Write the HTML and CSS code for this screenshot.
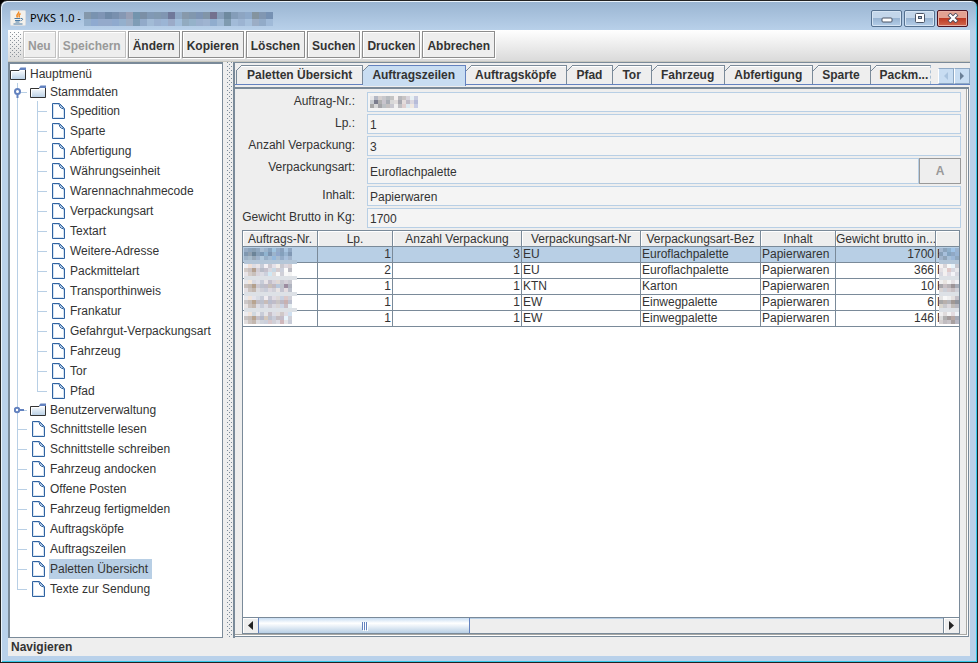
FILE: index.html
```html
<!DOCTYPE html>
<html lang="de">
<head>
  <meta charset="UTF-8">
  <title>PVKS 1.0</title>
  <link rel="stylesheet" href="styles.css">
</head>
<body>
  <svg class="defs" width="0" height="0" aria-hidden="true">
    <defs>
      <linearGradient id="folderFill" x1="0" y1="0" x2="0" y2="1">
        <stop offset="0" stop-color="#fff"/>
        <stop offset="1" stop-color="#b8cfe5"/>
      </linearGradient>
      <symbol id="folder" viewBox="0 0 16 16">
        <path d="M.5 4.500H9l1-1h5.500v10H.5z" fill="url(#folderFill)" stroke="#333"/>
        <path d="M9 3.500L10.500 1.500H16V4H9z" fill="#6382bf"/>
        <path d="M1.500 12.500v-7H10l1-1h3.500" fill="none" stroke="#fff"/>
      </symbol>
      <symbol id="leaf" viewBox="0 0 16 16">
        <path d="M2.500.5h7l5 5v10h-12z" fill="#fff" stroke="#2f62a0"/>
        <path d="M3.500 14.500v-13H9M13.500 6v8.500h-10" fill="none" stroke="#d5e3f2"/>
        <path d="M9 1l1 3 1 1 3 1" fill="none" stroke="#2f62a0"/>
        <path d="M10 2l3 3" stroke="#8fb0d8"/>
      </symbol>
      <symbol id="open" viewBox="0 0 8 10">
        <circle cx="4.500" cy="3.500" r="2.500" fill="#fff" stroke="#6382bf" stroke-width="2"/>
        <path d="M4.500 6v4" stroke="#6382bf" stroke-width="2"/>
      </symbol>
      <symbol id="closed" viewBox="0 0 10 8">
        <circle cx="3" cy="4" r="2.200" fill="#fff" stroke="#6382bf" stroke-width="2"/>
        <path d="M5 4h5" stroke="#6382bf" stroke-width="2"/>
      </symbol>
    </defs>
  </svg>

  <div class="window">
    <header class="titlebar">
      <svg class="app-icon" width="16" height="16" viewBox="0 0 16 16">
        <rect x=".5" y=".5" width="15" height="15" rx="1" fill="#f3f1ec" stroke="#d9dde2"/>
        <path d="M8.500 1.500c1.500 2-3.500 3-1 6M10.500 3.500c-2 1-2 2-1 4" fill="none" stroke="#f08a24" stroke-width="1.400"/>
        <path d="M4.500 8.500h6M5 10.500h5M5.500 12h4M3.500 14h9" stroke="#4a7aa5"/>
        <path d="M11 8.500c2.500-.5 2 2-.5 2.300" fill="none" stroke="#4a7aa5"/>
      </svg>
      <span class="title">PVKS 1.0 -</span>
      <svg class="mosaic" width="189" height="14" data-cols="27" data-size="7" data-colors="8498ab 7993b0 7f95b5 708aa8 7890ae 8598b4 98a0b6 7394ad 7b8fa6 8199b5 8199b0 8096b2 70799a 8ea8c5 8799ab 8197ae 7d94b4 8195a8 73718f 869fbb 6e8a9f 849db9 8da5c2 8ea9c9 84949f 8197b2 7691b3 95b0cc 8faad0 94aacb 94aacb 8faace 94b0cd 9cadc4 7f9db6 92aac9 a2bbd6 9bb1d0 9bb5d5 9babc8 a2bedb 92abc0 95b2ca 9bb0ce 9fb4d1 90adce 9fb9d5 7f9bb0 a2bbd8 9cb4d2 a6c0dc 9badc5 92abc8 a0bad8"></svg>
      <div class="window-buttons">
        <button type="button" class="win-btn" aria-label="Minimieren">
          <svg width="12" height="10" viewBox="0 0 12 10"><rect x="1" y="5" width="10" height="4" rx="1" fill="#fff" stroke="#4b5566"/></svg>
        </button>
        <button type="button" class="win-btn" aria-label="Maximieren">
          <svg width="12" height="10" viewBox="0 0 12 10"><rect x="1.500" y=".5" width="9" height="9" rx="1" fill="#fff" stroke="#4b5566"/><rect x="4.500" y="3.500" width="3" height="2" fill="#9fb8d2" stroke="#4b5566"/></svg>
        </button>
        <button type="button" class="win-btn close" aria-label="Schließen">
          <svg width="12" height="10" viewBox="0 0 12 10"><path d="M2 1l8 8M10 1L2 9" stroke="#4b4a5c" stroke-width="4"/><path d="M2.500 1.500l7 7M9.500 1.500l-7 7" stroke="#fff" stroke-width="2.400"/></svg>
        </button>
      </div>
    </header>

    <nav class="toolbar">
      <span class="grip"></span>
      <button type="button" disabled>Neu</button>
      <button type="button" disabled>Speichern</button>
      <button type="button">Ändern</button>
      <button type="button">Kopieren</button>
      <button type="button">Löschen</button>
      <button type="button">Suchen</button>
      <button type="button">Drucken</button>
      <button type="button">Abbrechen</button>
    </nav>

    <main class="split">
      <aside class="tree">
        <div class="node root"><svg class="icon"><use href="#folder"/></svg><a href="#">Hauptmenü</a></div>
        <ul>
          <li>
            <div class="node folder"><svg class="handle open"><use href="#open"/></svg><svg class="icon"><use href="#folder"/></svg><a href="#">Stammdaten</a></div>
            <ul>
              <li><div class="node"><svg class="icon"><use href="#leaf"/></svg><a href="#">Spedition</a></div></li>
              <li><div class="node"><svg class="icon"><use href="#leaf"/></svg><a href="#">Sparte</a></div></li>
              <li><div class="node"><svg class="icon"><use href="#leaf"/></svg><a href="#">Abfertigung</a></div></li>
              <li><div class="node"><svg class="icon"><use href="#leaf"/></svg><a href="#">Währungseinheit</a></div></li>
              <li><div class="node"><svg class="icon"><use href="#leaf"/></svg><a href="#">Warennachnahmecode</a></div></li>
              <li><div class="node"><svg class="icon"><use href="#leaf"/></svg><a href="#">Verpackungsart</a></div></li>
              <li><div class="node"><svg class="icon"><use href="#leaf"/></svg><a href="#">Textart</a></div></li>
              <li><div class="node"><svg class="icon"><use href="#leaf"/></svg><a href="#">Weitere-Adresse</a></div></li>
              <li><div class="node"><svg class="icon"><use href="#leaf"/></svg><a href="#">Packmittelart</a></div></li>
              <li><div class="node"><svg class="icon"><use href="#leaf"/></svg><a href="#">Transporthinweis</a></div></li>
              <li><div class="node"><svg class="icon"><use href="#leaf"/></svg><a href="#">Frankatur</a></div></li>
              <li><div class="node"><svg class="icon"><use href="#leaf"/></svg><a href="#">Gefahrgut-Verpackungsart</a></div></li>
              <li><div class="node"><svg class="icon"><use href="#leaf"/></svg><a href="#">Fahrzeug</a></div></li>
              <li><div class="node"><svg class="icon"><use href="#leaf"/></svg><a href="#">Tor</a></div></li>
              <li><div class="node"><svg class="icon"><use href="#leaf"/></svg><a href="#">Pfad</a></div></li>
            </ul>
          </li>
          <li><div class="node folder"><svg class="handle closed"><use href="#closed"/></svg><svg class="icon"><use href="#folder"/></svg><a href="#">Benutzerverwaltung</a></div></li>
          <li><div class="node"><svg class="icon"><use href="#leaf"/></svg><a href="#">Schnittstelle lesen</a></div></li>
          <li><div class="node"><svg class="icon"><use href="#leaf"/></svg><a href="#">Schnittstelle schreiben</a></div></li>
          <li><div class="node"><svg class="icon"><use href="#leaf"/></svg><a href="#">Fahrzeug andocken</a></div></li>
          <li><div class="node"><svg class="icon"><use href="#leaf"/></svg><a href="#">Offene Posten</a></div></li>
          <li><div class="node"><svg class="icon"><use href="#leaf"/></svg><a href="#">Fahrzeug fertigmelden</a></div></li>
          <li><div class="node"><svg class="icon"><use href="#leaf"/></svg><a href="#">Auftragsköpfe</a></div></li>
          <li><div class="node"><svg class="icon"><use href="#leaf"/></svg><a href="#">Auftragszeilen</a></div></li>
          <li><div class="node"><svg class="icon"><use href="#leaf"/></svg><a href="#" class="selected">Paletten Übersicht</a></div></li>
          <li><div class="node"><svg class="icon"><use href="#leaf"/></svg><a href="#">Texte zur Sendung</a></div></li>
        </ul>
      </aside>

      <div class="divider"></div>

      <section class="content">
        <div class="tabs">
          <button type="button" class="tab">Paletten Übersicht</button>
          <button type="button" class="tab active">Auftragszeilen</button>
          <button type="button" class="tab">Auftragsköpfe</button>
          <button type="button" class="tab">Pfad</button>
          <button type="button" class="tab">Tor</button>
          <button type="button" class="tab">Fahrzeug</button>
          <button type="button" class="tab">Abfertigung</button>
          <button type="button" class="tab">Sparte</button>
          <button type="button" class="tab last">Packm...</button>
          <div class="tab-scroll">
            <button type="button" disabled aria-label="Zurück"><svg width="6" height="8" viewBox="0 0 6 8"><path d="M5 0v8L1 4z" fill="#a9c3de"/></svg></button>
            <button type="button" aria-label="Weiter"><svg width="6" height="8" viewBox="0 0 6 8"><path d="M1 0v8l4-4z" fill="#6a7f96"/></svg></button>
          </div>
        </div>

        <div class="panel">
          <form class="form">
            <label for="auftrag">Auftrag-Nr.:</label>
            <div class="field">
              <input type="text" id="auftrag" readonly>
              <svg class="mosaic over" width="50" height="12" data-cols="12" data-size="4" data-colors="e8e8ea b4b8c4 d4d0d0 c8c8cc b8bcc0 c4c4c4 f4f0f0 b8b8bc c8c4c4 d8d4dc e8f0f4 c8cce0 c8ccd0 7a7c8c b0b0b0 c8c4cc a8acb4 d8d8d8 e0dcdc a8a8b0 e4dcdc c0bcc8 dcd8e0 b8bcd8 a8a8a8 d8d8d8 a4a4a8 bcc0c4 c4c0c0 c8c8d0 f0f0f0 c0c0c4 e0d0d0 dce8f0 f0e8e0 c8cce4"></svg>
            </div>
            <label for="lp">Lp.:</label>
            <div class="field"><input type="text" id="lp" value="1" readonly></div>
            <label for="anzahl">Anzahl Verpackung:</label>
            <div class="field"><input type="text" id="anzahl" value="3" readonly></div>
            <label for="art">Verpackungsart:</label>
            <div class="field tall">
              <input type="text" id="art" value="Euroflachpalette" readonly>
              <button type="button" disabled>A</button>
            </div>
            <label for="inhalt">Inhalt:</label>
            <div class="field"><input type="text" id="inhalt" value="Papierwaren" readonly></div>
            <label for="gewicht">Gewicht Brutto in Kg:</label>
            <div class="field"><input type="text" id="gewicht" value="1700" readonly></div>
          </form>

          <div class="table-box">
            <div class="table-view">
              <table>
                <colgroup>
                  <col class="c75"><col class="c75"><col class="c129"><col class="c119"><col class="c120"><col class="c75"><col class="c100"><col class="c75">
                </colgroup>
                <thead>
                  <tr><th>Auftrags-Nr.</th><th>Lp.</th><th>Anzahl Verpackung</th><th>Verpackungsart-Nr</th><th>Verpackungsart-Bez</th><th>Inhalt</th><th>Gewicht brutto in...</th><th></th></tr>
                </thead>
                <tbody>
                  <tr class="selected"><td class="masked"></td><td class="num">1</td><td class="num">3</td><td>EU</td><td>Euroflachpalette</td><td>Papierwaren</td><td class="num">1700</td><td class="masked end">F</td></tr>
                  <tr><td class="masked"></td><td class="num">2</td><td class="num">1</td><td>EU</td><td>Euroflachpalette</td><td>Papierwaren</td><td class="num">366</td><td class="masked end">F</td></tr>
                  <tr><td class="masked"></td><td class="num">1</td><td class="num">1</td><td>KTN</td><td>Karton</td><td>Papierwaren</td><td class="num">10</td><td class="masked end">H</td></tr>
                  <tr><td class="masked"></td><td class="num">1</td><td class="num">1</td><td>EW</td><td>Einwegpalette</td><td>Papierwaren</td><td class="num">6</td><td class="masked end">L</td></tr>
                  <tr><td class="masked"></td><td class="num">1</td><td class="num">1</td><td>EW</td><td>Einwegpalette</td><td>Papierwaren</td><td class="num">146</td><td class="masked end">F</td></tr>
                </tbody>
              </table>
            </div>
            <div class="scrollbar">
              <button type="button" aria-label="Nach links"><svg width="5" height="9" viewBox="0 0 5 9"><path d="M5 0v9L0 4.500z" fill="#222"/></svg></button>
              <div class="track"><div class="thumb"><i></i><i></i><i></i></div></div>
              <button type="button" class="right" aria-label="Nach rechts"><svg width="5" height="9" viewBox="0 0 5 9"><path d="M0 0v9l5-4.500z" fill="#222"/></svg></button>
            </div>
          </div>
        </div>
      </section>
    </main>

    <footer class="status">Navigieren</footer>
  </div>

  <script src="script.js"></script>
</body>
</html>
```
FILE: styles.css
```css
* {
  box-sizing: border-box;
}
html, body {
  height: 100%;
}
body {
  margin: 0;
  background: #000;
  color: #333;
  font: 12px/16px "Liberation Sans", Arial, sans-serif;
  overflow: hidden;
}
button, input {
  font: inherit;
  color: inherit;
  margin: 0;
  padding: 0;
}
a {
  color: inherit;
  text-decoration: none;
}
svg {
  display: block;
  flex: none;
}
.defs {
  position: absolute;
}

/* window frame */
.window {
  display: flex;
  flex-direction: column;
  height: 100vh;
  padding: 0 6px 6px;
  border: 1px solid #222;
  border-radius: 7px 7px 0 0;
  background: linear-gradient(#99b4d1, #b9d1ea 30px);
  box-shadow: inset 1px 1px #eaf3fb, inset -1px -1px #35c8e8;
}
.titlebar {
  display: flex;
  align-items: center;
  height: 29px;
  padding: 5px 3px 0;
}
.title {
  margin: 0 3px 0 4px;
  color: #000;
  font-family: "Noto Sans", sans-serif;
  font-size: 11px;
}
.titlebar .mosaic {
  margin-top: 2px;
}
.window-buttons {
  display: flex;
  gap: 2px;
  margin-left: auto;
}
.win-btn {
  display: flex;
  align-items: center;
  justify-content: center;
  width: 31px;
  height: 17px;
  border: 1px solid #54708f;
  border-radius: 2px;
  background: linear-gradient(#c3d6ea 50%, #98b4d2 50%, #b4cee8);
  box-shadow: inset 0 0 0 1px #d5e4f3;
}
.win-btn.close {
  border-color: #4d1220;
  background: linear-gradient(#e2a191 50%, #bd3a23 50%, #d1684f);
  box-shadow: inset 0 0 0 1px #e8b0a4;
}

/* toolbar */
.toolbar {
  display: flex;
  gap: 2px;
  height: 32px;
  margin: 0 1px;
  padding: 1px 0 4px 1px;
  border-bottom: 1px solid #c8c8c0;
  background: linear-gradient(#fff, #dadada);
}
.toolbar button {
  height: 27px;
  padding: 2px 4px 0;
  border: 1px solid #8c8c8c;
  background: #eee;
  box-shadow: inset 1px 1px #fff, 1px 1px #fff;
  font-weight: bold;
}
.toolbar button:disabled {
  border-color: #c2c2c2;
  color: #999;
}
.grip {
  width: 12px;
  background:
    conic-gradient(at 1px 1px, transparent 75%, #8a929a 0) 1px 1px / 4px 4px,
    conic-gradient(at 1px 1px, transparent 75%, #8a929a 0) 3px 3px / 4px 4px;
}

/* main area */
.split {
  display: flex;
  flex: 1;
  min-height: 0;
  margin: 0 1px;
  background: #eee;
}
.tree {
  width: 215px;
  border: 1px solid #7a8a99;
  border-left-width: 2px;
  border-top-width: 2px;
  background: #fff;
  overflow: hidden;
}
.tree ul {
  margin: 0;
  padding: 0 0 0 7px;
  list-style: none;
}
.tree ul ul {
  padding-left: 20px;
}
.tree li {
  background: linear-gradient(#b8cfe5, #b8cfe5) 0 0 / 1px 100% no-repeat;
}
.tree li:last-child {
  background-size: 1px 10px;
}
.node {
  position: relative;
  display: flex;
  align-items: center;
  gap: 3px;
  height: 20px;
  padding-left: 13px;
  background: linear-gradient(#b8cfe5, #b8cfe5) 0 50% / 10px 1px no-repeat;
}
.node.folder {
  height: 18px;
}
.node.root {
  height: 19px;
  padding-left: 0;
  background: none;
}
.node a {
  padding: 0 2px 0 1px;
  line-height: 18px;
}
.node a.selected {
  padding-right: 4px;
  background: #b8cfe5;
  line-height: 20px;
}
.icon {
  width: 16px;
  height: 16px;
}
.handle {
  position: absolute;
}
.handle.open {
  left: -4px;
  top: 5px;
  width: 8px;
  height: 10px;
}
.handle.closed {
  left: -3px;
  top: 5px;
  width: 10px;
  height: 8px;
}
.divider {
  width: 10px;
  border: solid #eee;
  border-width: 0 1px 0 4px;
  background:
    conic-gradient(at 1px 1px, transparent 75%, #7a8a99 0) 0 0 / 4px 4px,
    conic-gradient(at 1px 1px, transparent 75%, #7a8a99 0) 2px 2px / 4px 4px;
}

/* tabs */
.content {
  display: flex;
  flex: 1;
  flex-direction: column;
  min-width: 0;
  border: 1px solid #7a8a99;
  border-width: 1px 0 0 2px;
}
.tabs {
  display: flex;
  height: 22px;
  padding: 2px 0 0 1px;
  border-bottom: 1px solid #6382bf;
}
.tab {
  position: relative;
  padding: 0 10px 0 9px;
  border: 1px solid #7a8a99;
  border-width: 1px 1px 0 0;
  background: #eee;
  box-shadow: inset 0 1px #fff;
  font-weight: bold;
  white-space: nowrap;
}
.tab:first-child {
  padding-left: 10px;
  border-left-width: 1px;
}
.tab::before {
  content: "";
  position: absolute;
  left: 0;
  top: -1px;
  width: 6px;
  height: 6px;
  background: linear-gradient(135deg, #eee 45%, #7a8a99 45%, #7a8a99 58%, transparent 58%);
}
.tab:first-child::before {
  left: -1px;
}
.tab.active {
  margin-bottom: -2px;
  padding-bottom: 2px;
  border-color: #6382bf;
  background: #c8ddf2;
  box-shadow: none;
}
.tab.last {
  padding-right: 2px;
  border-right: 1px dashed #a9bfd4;
}
.tab-scroll {
  display: flex;
  align-items: flex-end;
  margin-left: auto;
}
.tab-scroll button {
  display: flex;
  align-items: center;
  justify-content: center;
  width: 16px;
  height: 16px;
  border: 1px solid #8fa9c4;
  border-left-color: #fff;
  background: #c8ddf2;
}

/* form */
.panel {
  display: flex;
  flex: 1;
  flex-direction: column;
  min-height: 0;
  margin: 2px 1px 1px 0;
  padding: 3px 4px 1px 7px;
  border: solid #7a8a99;
  border-width: 2px 1px 1px 0;
  box-shadow: inset -1px -1px #fff, inset -2px -2px #a8a8a4;
}
.form {
  display: grid;
  grid-template-columns: 113px 1fr;
  gap: 2px 12px;
  margin: 0 3px 2px 0;
}
.form label {
  line-height: 18px;
  text-align: right;
  white-space: nowrap;
}
.field {
  position: relative;
  display: flex;
  height: 20px;
}
.field.tall {
  height: 26px;
}
.field input {
  flex: 1;
  min-width: 0;
  padding: 2px 2px 0;
  border: 1px solid #b8cfe5;
  background: #f4f4f4;
}
.field button {
  width: 42px;
  border: 1px solid #999;
  background: #eee;
  color: #999;
  font-weight: bold;
}
.mosaic.over {
  position: absolute;
  left: 3px;
  top: 4px;
}

/* table */
.table-box {
  display: flex;
  flex: 1;
  flex-direction: column;
  min-height: 0;
  margin: 0 4px 1px 0;
  border: 1px solid #7a8a99;
}
.table-view {
  flex: 1;
  background: #fff;
  overflow: hidden;
}
table {
  width: 768px;
  table-layout: fixed;
  border-collapse: separate;
  border-spacing: 0;
}
.c75 { width: 75px; }
.c100 { width: 100px; }
.c119 { width: 119px; }
.c120 { width: 120px; }
.c129 { width: 129px; }
th, td {
  height: 16px;
  padding: 0 1px;
  border: solid #7a8a99;
  border-width: 0 1px 1px 0;
  line-height: 15px;
  white-space: nowrap;
  overflow: hidden;
}
th {
  padding: 1px 0 0;
  background: #eee;
  box-shadow: inset 1px 1px #fff;
  font-weight: normal;
  line-height: 14px;
}
td.num {
  text-align: right;
}
tr.selected td {
  background: #b8cfe5;
}
td.masked {
  position: relative;
  overflow: visible;
}
td .mosaic {
  position: absolute;
  left: 1px;
  top: 1px;
}
td.end .mosaic {
  left: 3px;
}

/* scrollbar */
.scrollbar {
  display: flex;
  height: 16px;
  border-top: 1px solid #7a8a99;
  background: #eee;
}
.scrollbar button {
  display: flex;
  align-items: center;
  justify-content: center;
  width: 15px;
  border: 0;
  background: #eee;
  box-shadow: inset 1px 1px #fff;
}
.scrollbar button.right {
  width: 16px;
  border-left: 1px solid #7a8a99;
}
.track {
  flex: 1;
  box-shadow: inset 0 1px #b8cfe5;
}
.thumb {
  display: flex;
  align-items: center;
  justify-content: center;
  gap: 1px;
  width: 31%;
  height: 15px;
  border: solid #6382bf;
  border-width: 0 1px;
  background: linear-gradient(#c8ddf2, #fff 35%, #b8cfe5);
}
.thumb i {
  width: 1px;
  height: 8px;
  background: #6382bf;
  box-shadow: 1px 1px #fff;
}

.status {
  height: 18px;
  margin: 0 1px;
  padding: 1px 3px;
  background: #eee;
  font-weight: bold;
}
```
FILE: script.js
```js
const NS = 'http://www.w3.org/2000/svg';

// fill an svg with square cells, row by row
function paint(svg, colors, cols, size) {
  colors.forEach((color, i) => {
    const rect = document.createElementNS(NS, 'rect');
    rect.setAttribute('x', (i % cols) * size);
    rect.setAttribute('y', Math.floor(i / cols) * size);
    rect.setAttribute('width', size);
    rect.setAttribute('height', size);
    rect.setAttribute('fill', '#' + color);
    svg.appendChild(rect);
  });
}

document.querySelectorAll('.mosaic').forEach(svg => {
  paint(svg, svg.dataset.colors.split(' '), +svg.dataset.cols, +svg.dataset.size);
});

const numberMasks = [
  '98acc4 8ca4bc 8aa0b4 90a8c0 a8bed4 9cb4cc 88a4c0 a0c4e0 94acc8 88a0bc a8c4e0 90a8c4 8098b0 90a0b0 6c8498 88a0b8 7c98b4 90b4d0 7c94b0 9cb4cc 90a8cc 84a0bc 98b4d0 8098b4 a0b4c8 a8bccc 98a8b8 a0b4cc b0c8dc 98b0c8 a4bcd4 94b8dc a8bcd0 94acc8 a8c0dc a0b4cc',
  'f0f0f4 f0e0d8 dcdce4 e8e4e8 c8ccd8 f4f0f4 ccc8d0 e4e0e8 f4f0ec c8c8d0 dcd8e0 d8d0d4 d4ccc8 c8c0c0 b4a090 d0ccd4 b8bcc8 c4c0cc d8d8e0 c8d8e4 d4ccd0 ccd0dc fcfcfc bcbcc4 e8e4e8 d4ccc8 c8c0bc d8d4dc dcdce4 ccd0dc d0e8f4 e0dcdc f8f8f8 d0d0d8 f8f8f8 f4f4f4',
  'e8e8ec f4e8dc d8d8e0 e0e0e8 c8ccd8 e8e4e8 c4c0cc d8d4dc e0d8d4 c8c8d0 d4d0d8 c8c8d0 c8c0bc c0b8b4 b4a08c ccc8d0 bcc0cc c0bcc8 c8c0b8 c0b8c0 b8c8dc c0c4cc 9c8ca0 b0b4c0 e4e0e4 ccc4c0 c4b8b0 dcdce0 d0d0d8 c8ccd8 dcd8e0 d0d0d8 e8e4e4 c4c4d0 e4dce0 bcc0cc',
  'e8e8ec f0e4dc e4e4ec d8dce4 c8ccd8 f0ecf0 c8c8d4 e0dce4 dcd8d8 c8d0e0 dcc8c8 d0d0d8 ccc8c8 c4bcb8 b8a490 c0bcc4 bcc0cc c8bcb8 b8bccc c0bcc8 c8c4c4 bcb8c4 c8b0b0 bcc0d0 e8e4e4 ccc4c0 c4b8b0 dcdce4 c8ccd8 dcdce4 c8c4cc d8d8e0 d8d4d4 ccd4e4 c8bcc4 e4ecf0',
  'ececf0 f0e4dc d0d8e0 e8e8ec c8ccd8 e4e4e8 c8c0c8 dcdce4 e0dcdc d0c8c8 e0dce4 d0e0f0 c8c4c4 c4bcb8 b8a490 c4c0c8 b4b8c8 d4c8bc bcc0cc c8ccd8 c4bcc0 c4bcc8 e8f4fc d0d0d8 e0dcdc ccc4c0 c4b8b0 dcdce0 d0d4dc ccd0dc d8c8cc d0d0d8 dcdce4 d0b8bc e4e4e8 c8ccd8'
];
const nameMasks = [
  'a4b8d0 8ca4bc 90b0cc a0c4e8 9cb4d0 88a0b8 a8c0dc 84a4c0 90a8c4 98b4d4 a0b4cc 90a4b8 a8c0d8 9cb8d8 90a8c0',
  'f4f0f0 d8d4d8 f8f8f8 e8f4fc c8c8d0 e4e0e4 f0f0f0 e0c8c8 d8d8e0 e8e8ec d8d8e0 f4f0f0 e0dce4 f4f4f8 d8d8e0',
  'f0f0f0 e8e4e0 f4f4f4 e4e0e4 f0f0f4 a8a8ac c8c0c4 b8b4b8 9c9498 a8acb8 d8d4d4 ccd0d8 d4ccd0 c8c0c4 d0d0d8',
  'e4e4e4 f8f8f8 f0f0f0 e4e0e0 c4c0c8 a8a8a8 b8b0ac b4b4b8 a09894 90949c d8d4cc c8c8cc dcd8dc c0bcb8 b8b8c0',
  'f0f0f0 e0dcdc f4f4f4 e4dce0 f0f4f8 dcdcdc b0b0b0 a49c9c b8a8a4 a8acb8 d4d0d0 c0bcc0 c8c4c8 a8a0a0 b8b8c4'
];

document.querySelectorAll('tbody tr').forEach((row, i) => {
  row.querySelectorAll('.masked').forEach(cell => {
    const end = cell.classList.contains('end');
    const svg = document.createElementNS(NS, 'svg');
    svg.setAttribute('class', 'mosaic');
    svg.setAttribute('width', end ? 20 : 53);
    svg.setAttribute('height', 16);
    const strip = document.createElementNS(NS, 'rect');
    strip.setAttribute('y', 12);
    strip.setAttribute('width', end ? 20 : 53);
    strip.setAttribute('height', 4);
    strip.setAttribute('fill', i ? '#dde1e6' : '#b4c6d8');
    if (i < 4) svg.appendChild(strip);
    paint(svg, (end ? nameMasks : numberMasks)[i].split(' '), end ? 5 : 12, 4);
    cell.appendChild(svg);
  });
});
```
